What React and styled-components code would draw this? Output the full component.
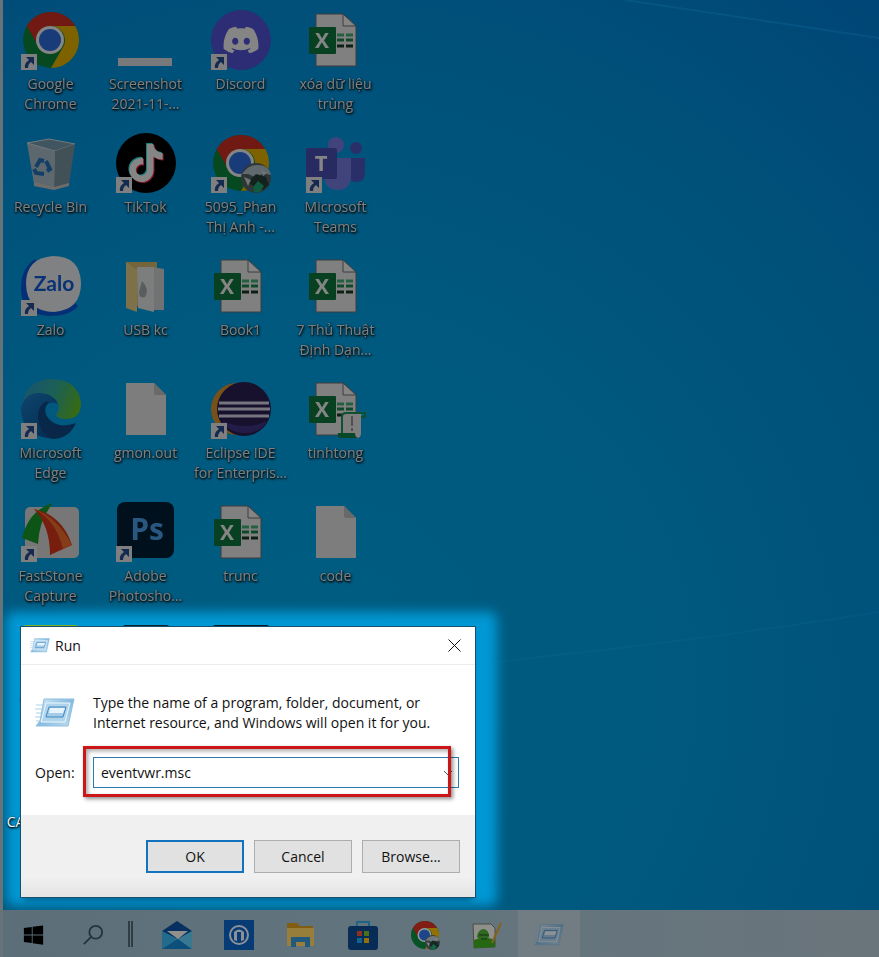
import React, { useState } from 'react';
import styled, { createGlobalStyle } from 'styled-components';
import { FaDiscord, FaTiktok, FaWindows } from 'react-icons/fa6';

const uiFont = '"Open Sans", "Noto Sans", "Liberation Sans", sans-serif';

/* ---------- icons ---------- */

const Chrome = ({ avatar }) => (
  <svg viewBox="-2 -2 60 60">
    <circle cx="28" cy="28" r="28" fill="#0c8a3e" />
    <path d="M28 14H52.25A28 28 0 0 0 3.75 14L15.88 35A14 14 0 0 1 28 14Z" fill="#d93025" />
    <path d="M52.25 14H28A14 14 0 0 1 40.12 35L28 56A28 28 0 0 0 52.25 14Z" fill="#f5bd00" />
    <circle cx="27" cy="28" r="14" fill="#fff" />
    <circle cx="27" cy="28" r="11" fill="#2f73e8" />
    {avatar && (
      <g>
        <circle cx="43" cy="43" r="15" fill="#59696b" />
        <path d="M29 39q8-12 22-8 6 3 7 9l-8-2-6 5-9-4z" fill="#b9c9d1" />
        <path d="M35 47l8-8 10 3 3 8-6 5-8-2z" fill="#27413a" />
        <path d="M40 52l5-6 6 5-4 6h-6z" fill="#1fae7a" />
        <path d="M31 42l7 3-3 6zM48 35l6 3-4 3z" fill="#d8dde0" />
      </g>
    )}
  </svg>
);

const Strip = () => (
  <svg viewBox="0 0 60 60">
    <rect x="2" y="48" width="54" height="8" fill="#e6e9ea" />
  </svg>
);

const Discord = () => (
  <svg viewBox="0 0 60 60">
    <circle cx="30" cy="30" r="30" fill="#5457e0" />
    <FaDiscord x="11" y="11" size={38} color="#fff" />
  </svg>
);

const Excel = ({ macro }) => (
  <svg viewBox="0 0 60 60">
    <path d="M10 4H37L50 16V56H10Z" fill="#f7f7f7" stroke="#747474" />
    <path d="M37 4V16H50Z" fill="#fff" stroke="#747474" />
    <path d="M31 25h7M40 25h7" stroke="#43b87b" strokeWidth="3" />
    <path d="M31 30h7M40 30h7" stroke="#1f8a50" strokeWidth="3" />
    <path d="M31 36h7M40 36h7" stroke="#1b3b2a" strokeWidth="3" />
    <rect x="3" y="17" width="27" height="27" rx="1" fill="#107c41" />
    <text x="16" y="38" textAnchor="middle" fontFamily={uiFont} fontSize="21" fontWeight="700" fill="#fff">X</text>
    {macro && (
      <g>
        <path d="M37 34H58q-3 0-3 4V54q0 5-4 5H34q3 0 3-5Z" fill="#f2f2f2" />
        <path d="M36 54V38q0-4 4-4H59v4h-4" fill="none" stroke="#1a9a5c" strokeWidth="2" />
        <path d="M32 54h17q0 5 4 5H35q-4 0-3-5Z" fill="#10894d" />
        <path d="M46 37v10M46 49v3" stroke="#444" strokeWidth="1" />
      </g>
    )}
  </svg>
);

const RecycleBin = () => (
  <svg viewBox="0 0 60 60">
    <path d="M6 10L31 17L49 11L44 46L31 56L13 50Z" fill="#b4c9d6" />
    <path d="M6 10L28 6L54 11L34 18Z" fill="#7ba3b6" stroke="#dfe7ea" />
    <path d="M34 18L54 11L48 52L33 56Z" fill="#7f99a9" />
    <path d="M7 12L34 18L33 56L13 50Z" fill="#b2c7d4" />
    <path d="M13 49L33 54L48 50V53L33 57L13 53Z" fill="#d5d0cb" />
    <g fill="none" stroke="#2478c8" strokeWidth="4">
      <path d="M15 34l4-7 4 1" />
      <path d="M25 28l4 8-3 2" />
      <path d="M23 41l-8-1-2-4" />
    </g>
  </svg>
);

const TikTok = () => (
  <svg viewBox="0 0 60 60">
    <circle cx="30" cy="30" r="30" fill="#000" />
    <FaTiktok x="10" y="10" size={38} color="#25f4ee" />
    <FaTiktok x="12" y="12" size={38} color="#fe2c55" />
    <FaTiktok x="11" y="11" size={38} color="#fff" />
  </svg>
);

const Teams = () => (
  <svg viewBox="0 0 60 60">
    <circle cx="50" cy="15" r="6" fill="#5059c9" />
    <path d="M44 25H59V40q0 9-9 9-6 0-6-5Z" fill="#5059c9" />
    <circle cx="30" cy="12" r="8" fill="#7b83eb" />
    <path d="M20 25H45V42q0 15-14 15-13-1-13-15Z" fill="#7b83eb" />
    <rect x="0" y="15" width="31" height="31" rx="2" fill="#4b53bc" />
    <text x="15" y="38" textAnchor="middle" fontFamily={uiFont} fontSize="22" fontWeight="700" fill="#fff">T</text>
  </svg>
);

const Zalo = () => (
  <svg viewBox="0 0 60 60">
    <path d="M14 3Q0 12 0 32Q0 59 28 60Q50 60 57 50Z" fill="#0a5be0" />
    <path d="M5 28Q5 2 32 0Q59 0 60 27Q60 54 33 56Q6 56 5 28Z" fill="#f6f8fa" />
    <text x="33" y="35" textAnchor="middle" fontFamily='"Lato", sans-serif' fontSize="21" fontWeight="700" fill="#1260e0">Zalo</text>
  </svg>
);

const Folder = () => (
  <svg viewBox="0 0 60 60">
    <path d="M10 6H41V50H10Z" fill="#e0c271" />
    <path d="M36 11L48 13V54H38Z" fill="#d8dcde" />
    <path d="M21 11H38V56L22 52Z" fill="#eef0f1" />
    <path d="M26 25q8 8 3 16-6 2-6-5z" fill="#aeb2b4" />
    <path d="M10 6L21 14V56L10 52Z" fill="#f3d98d" />
  </svg>
);

const Edge = () => (
  <svg viewBox="0 0 60 60">
    <defs>
      <linearGradient id="edgeTop" x1="0" y1="0.3" x2="1" y2="0.6">
        <stop offset="0" stopColor="#2ba4d4" />
        <stop offset="0.5" stopColor="#35b8a5" />
        <stop offset="1" stopColor="#69cc28" />
      </linearGradient>
      <linearGradient id="edgeLeft" x1="0" y1="0" x2="0.6" y2="1">
        <stop offset="0" stopColor="#1b86d1" />
        <stop offset="1" stopColor="#0c59a4" />
      </linearGradient>
    </defs>
    <path d="M1 25Q5 1 30 0Q57 0 60 24Q60 40 45 40Q35 40 35 35Q38 32 38 28Q36 17 22 15Q8 14 1 25Z" fill="url(#edgeTop)" />
    <path d="M0 30Q3 13 20 14Q33 15 37 25Q28 21 22 29Q16 45 35 58Q31 60 26 59Q1 55 0 30Z" fill="url(#edgeLeft)" />
    <path d="M19 28Q25 21 28 23Q20 32 29 41Q38 50 55 44Q48 60 31 60Q17 52 17 38Q17 32 19 28Z" fill="#104b8d" />
  </svg>
);

const BlankFile = () => (
  <svg viewBox="0 0 60 60">
    <path d="M10 4H38L50 16V56H10Z" fill="#f0f0f0" />
    <path d="M38 4L50 16H40Q38 16 38 14Z" fill="#c9c9c9" />
  </svg>
);

const Eclipse = () => (
  <svg viewBox="0 0 60 60">
    <circle cx="26" cy="30" r="26" fill="#e79b2e" />
    <circle cx="33" cy="30" r="27" fill="#2c2158" />
    <path d="M12 42Q34 52 56 42Q50 54 34 54Q18 54 12 42Z" fill="#44368a" />
    <path d="M8 24H58M7 30H59M8 37H58" stroke="#e4e1f2" strokeWidth="3" />
  </svg>
);

const FastStone = () => (
  <svg viewBox="0 0 60 60">
    <rect x="4" y="5" width="54" height="51" rx="5" fill="#e4e4e4" />
    <path d="M32 1Q8 8 1 36L17 42Q18 18 32 1Z" fill="#18a32a" />
    <path d="M13 7Q29 24 29 53L51 43Q41 13 13 7Z" fill="#e63a1c" />
    <path d="M13 7Q36 15 51 43L42 47Q35 18 13 7Z" fill="#ff7430" />
  </svg>
);

const Photoshop = () => (
  <svg viewBox="0 0 60 60">
    <rect x="1" y="0" width="57" height="56" rx="8" fill="#001e36" />
    <text x="31" y="38" textAnchor="middle" fontFamily={uiFont} fontSize="30" fontWeight="700" fill="#4ea8f5">Ps</text>
  </svg>
);

const Tile = ({ color, left, width }) => (
  <svg viewBox="0 0 60 60">
    <rect x={left} y="0" width={width} height="54" rx="2" fill={color} />
  </svg>
);

const ShortcutArrow = () => (
  <svg viewBox="0 0 16 16">
    <rect width="16" height="16" fill="#f4f4f4" />
    <path d="M5 3H13V11L10 8Q7 10 7 14H4Q3 9 8 6Z" fill="#27509c" />
  </svg>
);

const RunGlyph = () => (
  <svg viewBox="0 0 40 30">
    <defs>
      <linearGradient id="runBody" x1="0" y1="0" x2="1" y2="1">
        <stop offset="0" stopColor="#d9edf8" />
        <stop offset="0.5" stopColor="#86badf" />
        <stop offset="1" stopColor="#c3e0f2" />
      </linearGradient>
    </defs>
    <path d="M1 7H12M0 11H10M1 15H9M0 19H8M1 23H6" stroke="#a9cfe8" strokeWidth="1" />
    <path d="M9 1H39L33 28H1L5 23Z" fill="url(#runBody)" stroke="#8dbfde" />
    <path d="M11 5H35L30 24H6Z" fill="#afd4ec" stroke="#eff8fd" strokeWidth="1" />
    <path d="M14 9H31L28 19H11Z" fill="#a5cdea" stroke="#3f87bf" />
    <path d="M15 10H30L28 15H14Z" fill="#e8f4fb" />
  </svg>
);

const Search = () => (
  <svg viewBox="0 0 24 24" fill="none" stroke="#25333b" strokeWidth="2">
    <circle cx="15" cy="9" r="7" />
    <path d="M10 14L2 22" />
  </svg>
);

const Mail = () => (
  <svg viewBox="0 0 30 30">
    <path d="M0 11L15 1L30 11V18H0Z" fill="#0c4f9e" />
    <path d="M5 11H26L16 19Z" fill="#f4efe9" />
    <path d="M0 11L16 19L30 11V29H0Z" fill="#38b2ea" />
    <path d="M0 29L16 19L30 29Z" fill="#1583cd" />
    <path d="M16 19L30 11V29Z" fill="#5dc8f0" />
  </svg>
);

const Reader = () => (
  <svg viewBox="0 0 30 30">
    <rect width="30" height="30" fill="#0a63c4" />
    <circle cx="15" cy="15" r="9" fill="none" stroke="#e7f2fb" strokeWidth="2" />
    <path d="M10 20V12q5-5 10 0v8l-3 1V12h-4v9Z" fill="#e7f2fb" />
  </svg>
);

const Explorer = () => (
  <svg viewBox="0 0 30 30">
    <path d="M1 3H11L14 6H27V26H1Z" fill="#d79b1d" />
    <path d="M1 8H28V26H1Z" fill="#fcd462" />
    <path d="M5 27V17H24V27H19V22H10V27Z" fill="#3794d3" />
  </svg>
);

const Store = () => (
  <svg viewBox="0 0 30 30">
    <path d="M9 6V2H21V6" fill="none" stroke="#2ea5dd" strokeWidth="2" />
    <rect x="0" y="6" width="30" height="24" rx="3" fill="#0b4a8e" />
    <rect x="9" y="11" width="5" height="5" fill="#ee5035" />
    <rect x="16" y="11" width="5" height="5" fill="#7cbb2c" />
    <rect x="9" y="18" width="5" height="5" fill="#22a5ea" />
    <rect x="16" y="18" width="5" height="5" fill="#fcb813" />
  </svg>
);

const Editor = () => (
  <svg viewBox="0 0 30 30">
    <path d="M1 4H19L23 8V27L2 28Z" fill="#eef0e8" stroke="#75806f" />
    <path d="M2 20Q12 15 23 20V27L2 28Z" fill="#3fae1c" />
    <path d="M5 17Q6 9 12 9Q17 10 17 17L14 20H8Z" fill="#4fae35" />
    <path d="M7 15H17M9 19H15" stroke="#1c5216" strokeWidth="1" />
    <path d="M29 3L20 23" stroke="#e0a12a" strokeWidth="2" />
  </svg>
);

const Chevron = () => (
  <svg width="10" height="6" viewBox="0 0 10 6" fill="none" stroke="#555">
    <path d="M1 1L5 5L9 1" />
  </svg>
);

const Close = () => (
  <svg width="13" height="13" viewBox="0 0 13 13" fill="none" stroke="#111">
    <path d="M0.5 0.5L12.5 12.5M12.5 0.5L0.5 12.5" />
  </svg>
);

/* ---------- data ---------- */

const shortcuts = [
  { label: 'Google\nChrome', icon: <Chrome />, link: true },
  { label: 'Screenshot\n2021-11-...', icon: <Strip /> },
  { label: 'Discord', icon: <Discord />, link: true },
  { label: 'xóa dữ liệu\ntrùng', icon: <Excel /> },
  { label: 'Recycle Bin', icon: <RecycleBin /> },
  { label: 'TikTok', icon: <TikTok />, link: true },
  { label: '5095_Phan\nThị Anh -...', icon: <Chrome avatar />, link: true },
  { label: 'Microsoft\nTeams', icon: <Teams />, link: true },
  { label: 'Zalo', icon: <Zalo />, link: true },
  { label: 'USB kc', icon: <Folder /> },
  { label: 'Book1', icon: <Excel /> },
  { label: '7 Thủ Thuật\nĐịnh Dạn...', icon: <Excel /> },
  { label: 'Microsoft\nEdge', icon: <Edge />, link: true },
  { label: 'gmon.out', icon: <BlankFile /> },
  { label: 'Eclipse IDE\nfor Enterpris...', icon: <Eclipse />, link: true },
  { label: 'tinhtong', icon: <Excel macro /> },
  { label: 'FastStone\nCapture', icon: <FastStone />, link: true },
  { label: 'Adobe\nPhotosho...', icon: <Photoshop />, link: true },
  { label: 'trunc', icon: <Excel /> },
  { label: 'code', icon: <BlankFile /> },
  { label: 'Camtasia', icon: <Tile color="#7fae1f" left={3} width={54} />, lit: true },
  { label: '', icon: <Tile color="#10202c" left={7} width={46} />, lit: true },
  { label: '', icon: <Tile color="#0b1520" left={2} width={56} />, lit: true },
  { label: '', icon: null },
  { label: 'CALCULATOR', icon: null, lit: true },
];

const apps = [
  { name: 'Mail', icon: <Mail /> },
  { name: 'Reader', icon: <Reader /> },
  { name: 'File Explorer', icon: <Explorer /> },
  { name: 'Microsoft Store', icon: <Store /> },
  { name: 'Google Chrome', icon: <Chrome avatar /> },
  { name: 'Editor', icon: <Editor /> },
  { name: 'Run', icon: <RunGlyph />, active: true },
];

/* ---------- page ---------- */

const App = () => {
  const [command, setCommand] = useState('eventvwr.msc');

  return (
    <Screen>
      <GlobalStyle />
      <Desktop>
        <Wallpaper viewBox="0 0 876 910" preserveAspectRatio="none" aria-hidden="true">
          <path d="M622 0L876 38" stroke="#1b7cae" strokeWidth="2" opacity="0.2" />
          <path d="M490 662Q700 640 876 612" fill="none" stroke="#1b7cae" strokeWidth="2" opacity="0.12" />
        </Wallpaper>
        <Spotlight />
        <Shortcuts>
          {shortcuts.map((item, i) => (
            <Shortcut key={i} $lit={item.lit}>
              <ShortcutIcon>
                {item.icon}
                {item.link && <Badge><ShortcutArrow /></Badge>}
              </ShortcutIcon>
              <ShortcutLabel>{item.label}</ShortcutLabel>
            </Shortcut>
          ))}
        </Shortcuts>
        <Dialog role="dialog" aria-labelledby="runTitle">
          <TitleBar>
            <TitleIcon><RunGlyph /></TitleIcon>
            <Title id="runTitle">Run</Title>
            <CloseButton aria-label="Close"><Close /></CloseButton>
          </TitleBar>
          <Body>
            <Intro>
              <IntroIcon><RunGlyph /></IntroIcon>
              <p>
                Type the name of a program, folder, document, or<br />
                Internet resource, and Windows will open it for you.
              </p>
            </Intro>
            <OpenRow>
              <label htmlFor="command">Open:</label>
              <Combo>
                <ComboInput id="command" value={command} onChange={(e) => setCommand(e.target.value)} />
                <ComboArrow aria-label="Show history"><Chevron /></ComboArrow>
              </Combo>
            </OpenRow>
          </Body>
          <Footer>
            <DialogButton $primary>OK</DialogButton>
            <DialogButton>Cancel</DialogButton>
            <DialogButton>Browse...</DialogButton>
          </Footer>
        </Dialog>
      </Desktop>
      <Taskbar>
        <SystemButton aria-label="Start"><FaWindows size={21} color="#000" /></SystemButton>
        <SystemButton aria-label="Search"><Search /></SystemButton>
        <Divider />
        {apps.map((app) => (
          <TaskButton key={app.name} aria-label={app.name} $active={app.active}>
            {app.icon}
          </TaskButton>
        ))}
      </Taskbar>
    </Screen>
  );
};

const GlobalStyle = createGlobalStyle`
  * {
    box-sizing: border-box;
  }
  body {
    margin: 0;
    font-family: ${uiFont};
    font-size: 14px;
    color: #111;
  }
  p {
    margin: 0;
  }
  button, input {
    font: inherit;
    color: inherit;
    padding: 0;
    border: 0;
    background: none;
  }
  svg {
    display: block;
  }
`;

const Screen = styled.div`
  display: flex;
  flex-direction: column;
  min-height: 100vh;
  border-left: 3px solid #66747a;
`;

const Desktop = styled.main`
  position: relative;
  flex: 1;
  overflow: hidden;
  background: radial-gradient(circle at 35% 75%, #005d82 0%, #00587e 45%, #00507a 75%, #004676 100%);
`;

const Wallpaper = styled.svg`
  position: absolute;
  inset: 0;
  width: 100%;
  height: 100%;
`;

const Spotlight = styled.div`
  position: absolute;
  left: 3px;
  bottom: 4px;
  width: 491px;
  height: 294px;
  border-radius: 8px;
  background: #0098d4;
  filter: blur(6px);
`;

const Shortcuts = styled.div`
  position: relative;
  display: grid;
  grid-template-columns: repeat(4, 95px);
  grid-auto-rows: 123px;
`;

const Shortcut = styled.button`
  display: flex;
  flex-direction: column;
  align-items: center;
  gap: 4px;
  padding-top: 10px;
  filter: ${(p) => (p.$lit ? 'none' : 'brightness(0.52)')};
`;

const ShortcutIcon = styled.span`
  position: relative;
  width: 60px;
  height: 60px;
`;

const Badge = styled.span`
  position: absolute;
  left: 0;
  bottom: 0;
  width: 16px;
  height: 16px;
`;

const ShortcutLabel = styled.span`
  line-height: 20px;
  white-space: pre;
  color: #f4f4f4;
  text-shadow: 0 1px 2px #000, 1px 1px 3px #000;
`;

const Dialog = styled.section`
  position: absolute;
  left: 17px;
  bottom: 12px;
  width: 456px;
  border: 1px solid #17506e;
  background: #fff;
  box-shadow: 0 6px 6px -4px rgba(0, 60, 95, 0.6);
`;

const TitleBar = styled.header`
  display: flex;
  align-items: center;
  gap: 5px;
  height: 38px;
  padding: 0 14px 0 9px;
  border-bottom: 1px solid #ececec;
`;

const TitleIcon = styled.span`
  width: 20px;
`;

const Title = styled.h1`
  flex: 1;
  margin: 0;
  font-size: 14px;
  font-weight: 400;
`;

const CloseButton = styled.button`
  display: flex;
`;

const Body = styled.div`
  padding: 28px 16px 27px 14px;
`;

const Intro = styled.div`
  display: flex;
  align-items: center;
  gap: 18px;
  line-height: 20px;
`;

const IntroIcon = styled.span`
  width: 40px;
`;

const OpenRow = styled.div`
  display: grid;
  grid-template-columns: 48px 1fr;
  column-gap: 10px;
  align-items: center;
  margin-top: 24px;
`;

const Combo = styled.div`
  position: relative;
  display: flex;
  height: 31px;
  border: 1px solid #2a7ab0;

  /* red marker drawn over the field */
  &::after {
    content: '';
    position: absolute;
    inset: -12px 7px -10px -11px;
    border: 3px solid #cb1517;
    box-shadow: 2px 2px 4px rgba(0, 0, 0, 0.45), inset 2px 2px 4px rgba(0, 0, 0, 0.35);
    pointer-events: none;
  }
`;

const ComboInput = styled.input`
  flex: 1;
  min-width: 0;
  padding-left: 7px;
  outline: none;
`;

const ComboArrow = styled.button`
  display: flex;
  align-items: center;
  justify-content: center;
  width: 20px;
`;

const Footer = styled.footer`
  display: flex;
  justify-content: flex-end;
  gap: 10px;
  padding: 25px 15px 24px;
  background: linear-gradient(#f0f0f0 75%, #e4e4e4);
`;

const DialogButton = styled.button`
  width: 98px;
  height: 33px;
  background: #e1e1e1;
  border: ${(p) => (p.$primary ? '2px solid #1272be' : '1px solid #adadad')};
`;

const Taskbar = styled.nav`
  display: flex;
  height: 47px;
  background: linear-gradient(90deg, #5c6f79, #64757e 60%, #6a747b);
`;

const BarButton = styled.button`
  display: flex;
  align-items: center;
  justify-content: center;
  padding-top: 2px;
`;

const SystemButton = styled(BarButton)`
  width: 60px;

  svg {
    height: 22px;
  }
`;

const Divider = styled.span`
  align-self: center;
  width: 5px;
  height: 26px;
  margin: 0 13px 0 5px;
  border: solid #303d44;
  border-width: 0 2px;
`;

const TaskButton = styled(BarButton)`
  width: 62px;
  background: ${(p) => (p.$active ? '#727c83' : 'none')};

  svg {
    height: 30px;
    max-width: 30px;
    filter: brightness(0.6);
  }
`;

export default App;
